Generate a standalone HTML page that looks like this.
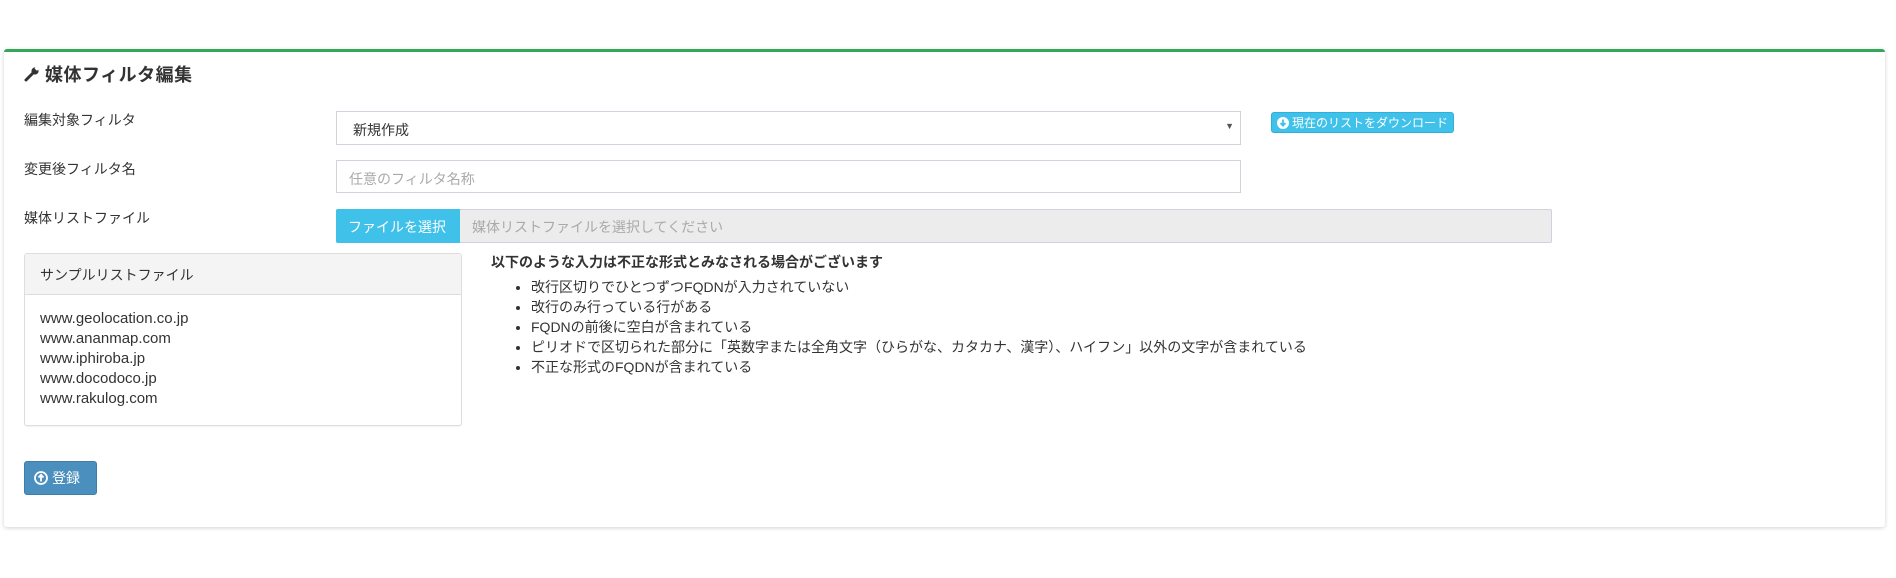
<!DOCTYPE html>
<html><head><meta charset="utf-8"><style>
*{box-sizing:border-box;margin:0;padding:0}
body{width:1896px;height:578px;background:#fff;font-family:"Liberation Sans","Noto Sans CJK JP",sans-serif;font-size:14px;color:#333;position:relative;overflow:hidden}
.panel{position:absolute;left:4px;top:49px;width:1881px;height:478px;border-top:3px solid #36a75a;border-radius:3px;box-shadow:0 1px 4px rgba(0,0,0,.18);background:#fff}
.a{position:absolute}
.lbl{font-size:14px;color:#333}
.box{border:1px solid #d2d2dc;background:#fff}
</style></head><body>
<div class="panel"></div>
<div class="a" style="left:24px;top:61px;font-size:18px;font-weight:bold;color:#333;display:flex;align-items:center;gap:5px">
<svg width="16" height="16" viewBox="0 0 16 16"><path d="M2 14 L9 7" stroke="#333" stroke-width="3" stroke-linecap="round"/><circle cx="11" cy="5" r="3.6" fill="#333"/><rect x="11" y="1.2" width="3.5" height="2.6" transform="rotate(45 12.5 2.5)" fill="#fff"/></svg>
<span style="letter-spacing:0.5px">媒体フィルタ編集</span></div>
<div class="a lbl" style="left:24px;top:110px">編集対象フィルタ</div>
<div class="a lbl" style="left:24px;top:159px">変更後フィルタ名</div>
<div class="a lbl" style="left:24px;top:208px">媒体リストファイル</div>
<div class="a box" style="left:336px;top:111px;width:905px;height:34px;padding:8px 16px;font-size:14px">新規作成<span style="position:absolute;right:6px;top:9px;font-size:9px;color:#555">▼</span></div>
<div class="a" style="left:1271px;top:112px;width:183px;height:21px;background:#3fc1ea;border:1px solid #2fb0db;border-radius:3px;color:#fff;font-size:12px;padding:2px 5px;white-space:nowrap;display:flex;align-items:center;gap:3px"><svg width="12" height="12" viewBox="0 0 12 12"><circle cx="6" cy="6" r="6" fill="#fff"/><path d="M6 2.5 V8.5 M3.5 6 L6 8.7 L8.5 6" stroke="#3fc1ea" stroke-width="1.8" fill="none"/></svg>現在のリストをダウンロード</div>
<div class="a box" style="left:336px;top:160px;width:905px;height:33px;padding:8px 12px;color:#aaa;font-size:14px">任意のフィルタ名称</div>
<div class="a" style="left:336px;top:209px;width:1216px;height:34px;background:#ececec;border:1px solid #d2d2dc;border-radius:2px"></div>
<div class="a" style="left:336px;top:209px;width:124px;height:34px;background:#3fc1ea;color:#fff;padding:8px 12px;font-size:14px;border-radius:2px 0 0 2px">ファイルを選択</div>
<div class="a" style="left:472px;top:217px;color:#aaa;font-size:14px">媒体リストファイルを選択してください</div>
<div class="a" style="left:24px;top:253px;width:438px;height:173px;border:1px solid #ddd;border-radius:3px;box-shadow:0 1px 1px rgba(0,0,0,.05)">
<div style="height:41px;background:#f4f4f4;border-bottom:1px solid #ddd;padding:11px 15px;font-size:14px">サンプルリストファイル</div>
<div style="padding:14px 15px;line-height:20px;font-size:15px">www.geolocation.co.jp<br>www.ananmap.com<br>www.iphiroba.jp<br>www.docodoco.jp<br>www.rakulog.com</div>
</div>
<div class="a" style="left:491px;top:252px;font-weight:bold;font-size:14px">以下のような入力は不正な形式とみなされる場合がございます</div>
<ul class="a" style="left:531px;top:277px;line-height:20px;font-size:14px;list-style:disc">
<li>改行区切りでひとつずつFQDNが入力されていない</li>
<li>改行のみ行っている行がある</li>
<li>FQDNの前後に空白が含まれている</li>
<li>ピリオドで区切られた部分に「英数字または全角文字（ひらがな、カタカナ、漢字）、ハイフン」以外の文字が含まれている</li>
<li>不正な形式のFQDNが含まれている</li>
</ul>
<div class="a" style="left:24px;top:461px;width:73px;height:34px;background:#4a8fbd;border:1px solid #3e7eaa;border-radius:3px;color:#fff;font-size:14px;padding:0 9px;white-space:nowrap;display:flex;align-items:center;gap:4px"><svg width="14" height="14" viewBox="0 0 14 14"><circle cx="7" cy="7" r="6" fill="none" stroke="#fff" stroke-width="1.8"/><path d="M7 10.5 V4 M4.5 6.5 L7 3.8 L9.5 6.5" stroke="#fff" stroke-width="1.8" fill="none"/></svg>登録</div>
</body></html>
